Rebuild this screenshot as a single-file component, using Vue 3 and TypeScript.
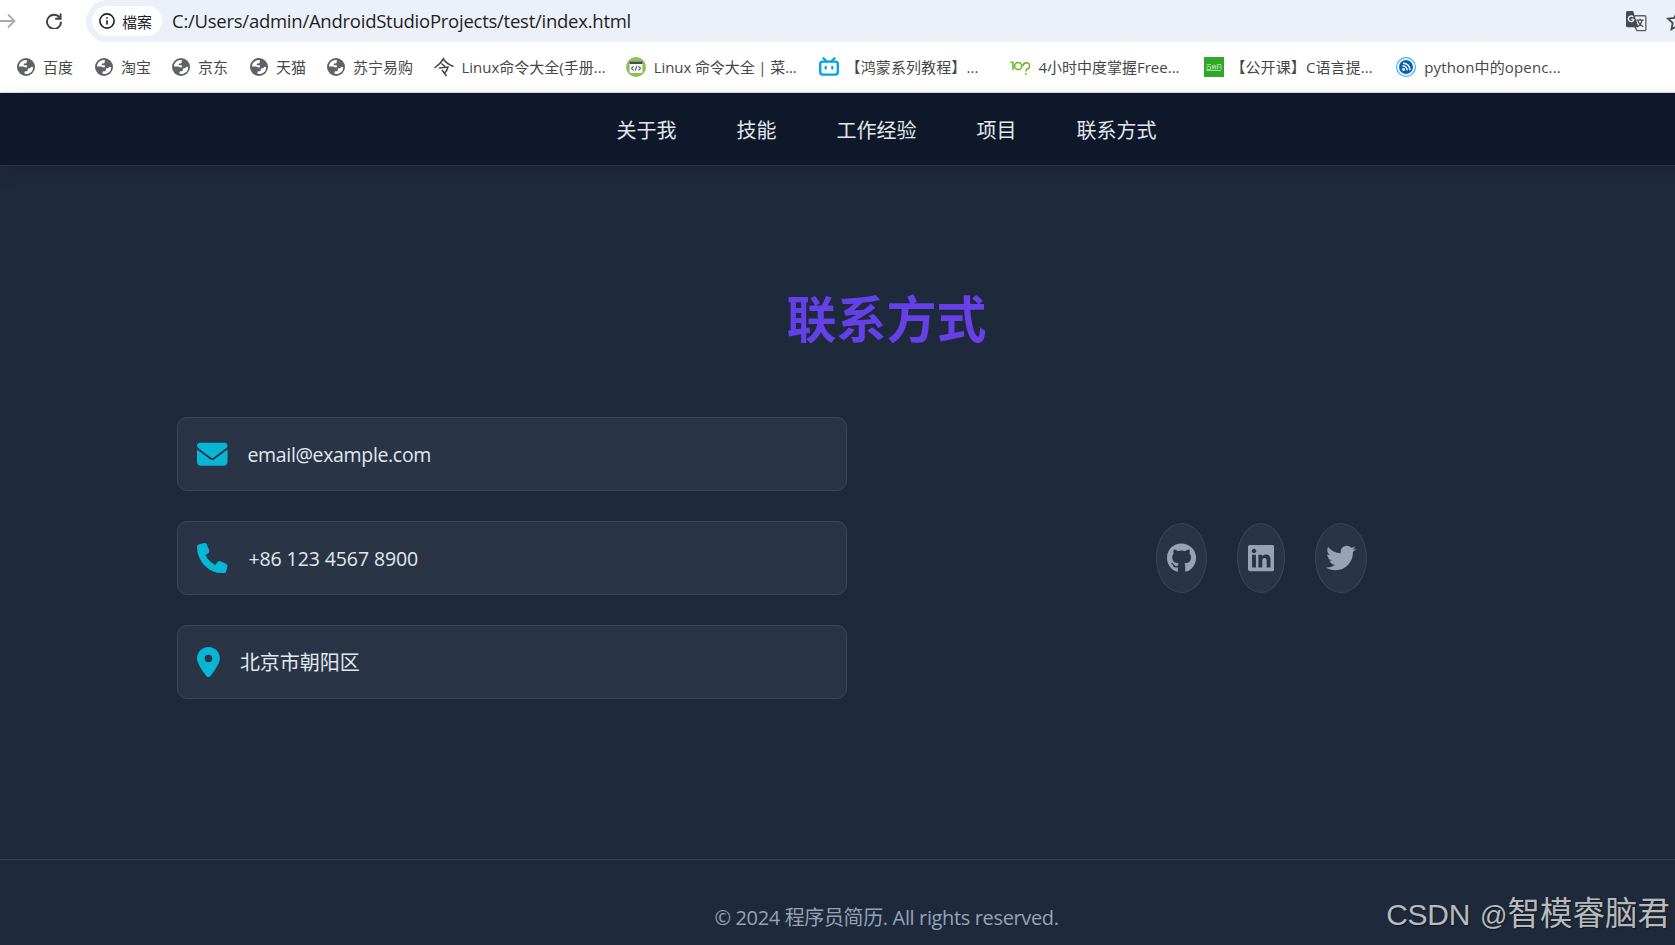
<script setup lang="ts">
interface Bookmark {
  title: string
  icon: 'globe' | 'ling' | 'code' | 'tv' | 'hundred' | 'school' | 'feed'
  size: string
  tone: string
}

const bookmarks: Bookmark[] = [
  { title: '百度', icon: 'globe', size: 'w78', tone: 'cjk' },
  { title: '淘宝', icon: 'globe', size: 'w77', tone: 'cjk' },
  { title: '京东', icon: 'globe', size: 'w78', tone: 'cjk' },
  { title: '天猫', icon: 'globe', size: 'w77', tone: 'cjk' },
  { title: '苏宁易购', icon: 'globe', size: 'w108', tone: 'cjk' },
  { title: 'Linux命令大全(手册...', icon: 'ling', size: 'w192', tone: 'mixed' },
  { title: 'Linux 命令大全 | 菜...', icon: 'code', size: 'w192', tone: 'snug' },
  { title: '【鸿蒙系列教程】...', icon: 'tv', size: 'w192', tone: 'bracket' },
  { title: '4小时中度掌握Free...', icon: 'hundred', size: 'w193', tone: 'mixed' },
  { title: '【公开课】C语言提...', icon: 'school', size: 'w192', tone: 'bracket' },
  { title: 'python中的openc...', icon: 'feed', size: 'w192', tone: 'latin' },
]

const navLinks: string[] = ['关于我', '技能', '工作经验', '项目', '联系方式']

const contacts = [
  {
    text: 'email@example.com',
    tone: 'mail',
    box: '0 0 512 512',
    path: 'M48 64C21.5 64 0 85.5 0 112c0 15.1 7.1 29.3 19.2 38.4L236.8 313.6c11.4 8.5 27 8.5 38.4 0L492.8 150.4c12.1-9.1 19.2-23.3 19.2-38.4c0-26.5-21.5-48-48-48H48zM0 176V384c0 35.3 28.7 64 64 64H448c35.3 0 64-28.7 64-64V176L294.4 339.2c-22.8 17.1-54 17.1-76.8 0L0 176z',
  },
  {
    text: '+86 123 4567 8900',
    tone: 'phone',
    box: '0 0 512 512',
    path: 'M164.9 24.6c-7.7-18.6-28-28.5-47.4-23.2l-88 24C12.1 30.2 0 46 0 64C0 311.4 200.6 512 448 512c18 0 33.8-12.1 38.6-29.5l24-88c5.3-19.4-4.6-39.7-23.2-47.4l-96-40c-16.3-6.8-35.2-2.1-46.3 11.6L304.7 368C234.3 334.7 177.3 277.7 144 207.3L193.3 167c13.7-11.2 18.4-30 11.6-46.3l-40-96z',
  },
  {
    text: '北京市朝阳区',
    tone: 'place',
    box: '0 0 384 512',
    path: 'M215.7 499.2C267 435 384 279.4 384 192C384 86 298 0 192 0S0 86 0 192c0 87.4 117 243 168.3 307.2c12.3 15.3 35.1 15.3 47.4 0zM192 128a64 64 0 1 1 0 128 64 64 0 1 1 0-128z',
  },
]

const socials = [
  {
    name: 'github',
    box: '0 0 496 512',
    path: 'M165.9 397.4c0 2-2.3 3.6-5.2 3.6-3.3.3-5.6-1.3-5.6-3.6 0-2 2.3-3.6 5.2-3.6 3-.3 5.6 1.3 5.6 3.6zm-31.1-4.5c-.7 2 1.3 4.3 4.3 4.9 2.6 1 5.6 0 6.2-2s-1.3-4.3-4.3-5.2c-2.6-.7-5.5.3-6.2 2.3zm44.2-1.7c-2.9.7-4.9 2.6-4.6 4.9.3 2 2.9 3.3 5.9 2.6 2.9-.7 4.9-2.6 4.6-4.6-.3-1.9-3-3.2-5.9-2.9zM244.8 8C106.1 8 0 113.3 0 252c0 110.9 69.8 205.8 169.5 239.2 12.8 2.3 17.3-5.6 17.3-12.1 0-6.2-.3-40.4-.3-61.4 0 0-70 15-84.7-29.8 0 0-11.4-29.1-27.8-36.6 0 0-22.9-15.7 1.6-15.4 0 0 24.9 2 38.6 25.8 21.9 38.6 58.6 27.5 72.9 20.9 2.3-16 8.8-27.1 16-33.7-55.9-6.2-112.3-14.3-112.3-110.5 0-27.5 7.6-41.3 23.6-58.9-2.6-6.5-11.1-33.3 2.6-67.9 20.9-6.5 69 27 69 27 20-5.6 41.5-8.5 62.8-8.5s42.8 2.9 62.8 8.5c0 0 48.1-33.6 69-27 13.7 34.7 5.2 61.4 2.6 67.9 16 17.7 25.8 31.5 25.8 58.9 0 96.5-58.9 104.2-114.8 110.5 9.2 7.9 17 22.9 17 46.4 0 33.7-.3 75.4-.3 83.6 0 6.5 4.6 14.4 17.3 12.1C428.2 457.8 496 362.9 496 252 496 113.3 383.5 8 244.8 8z',
  },
  {
    name: 'linkedin',
    box: '0 0 448 512',
    path: 'M416 32H31.9C14.3 32 0 46.5 0 64.3v383.4C0 465.5 14.3 480 31.9 480H416c17.6 0 32-14.5 32-32.3V64.3c0-17.8-14.4-32.3-32-32.3zM135.4 416H69V202.2h66.5V416zm-33.2-243c-21.3 0-38.5-17.3-38.5-38.5S80.9 96 102.2 96c21.2 0 38.5 17.3 38.5 38.5 0 21.3-17.2 38.5-38.5 38.5zm282.1 243h-66.4V312c0-24.8-.5-56.7-34.5-56.7-34.6 0-39.9 27-39.9 54.9V416h-66.4V202.2h63.7v29.2h.9c8.9-16.8 30.6-34.5 62.9-34.5 67.2 0 79.7 44.3 79.7 101.9V416z',
  },
  {
    name: 'twitter',
    box: '0 0 512 512',
    path: 'M459.37 151.716c.325 4.548.325 9.097.325 13.645 0 138.72-105.583 298.558-298.558 298.558-59.452 0-114.68-17.219-161.137-47.106 8.447.974 16.568 1.299 25.34 1.299 49.055 0 94.213-16.568 130.274-44.832-46.132-.975-84.792-31.188-98.112-72.772 6.498.974 12.995 1.624 19.818 1.624 9.421 0 18.843-1.3 27.614-3.573-48.081-9.747-84.143-51.98-84.143-102.985v-1.299c13.969 7.797 30.214 12.67 47.431 13.319-28.264-18.843-46.781-51.005-46.781-87.391 0-19.492 5.197-37.36 14.294-52.954 51.655 63.675 129.3 105.258 216.365 109.807-1.624-7.797-2.599-15.918-2.599-24.04 0-57.828 46.782-104.934 104.934-104.934 30.213 0 57.502 12.67 76.67 33.137 23.715-4.548 46.456-13.32 66.599-25.34-7.798 24.366-24.366 44.833-46.132 57.827 21.117-2.273 41.584-8.122 60.426-16.243-14.292 20.791-32.161 39.308-52.628 54.253z',
  },
]
</script>

<template>
  <div class="window">
    <div class="toolbar">
      <svg class="forward" viewBox="0 0 16 16"><path d="M0 8h14M8 1.5 14.5 8 8 14.5" /></svg>
      <svg class="reload" viewBox="0 0 16 16">
        <path d="M13.6 4.6A7 7 0 1 0 15 8.8" />
        <path d="M14.6 .4v5.3H9.2" />
      </svg>
      <div class="omnibox">
        <div class="chip">
          <svg class="info" viewBox="0 0 16 16">
            <circle cx="8" cy="8" r="7.1" />
            <path d="M8 7.3v4.3M8 4.3v1.5" />
          </svg>
          <span>檔案</span>
        </div>
        <span class="url">C:/Users/admin/AndroidStudioProjects/test/index.html</span>
        <svg class="translate" viewBox="0 0 22 22">
          <path d="M9 5h10.5q1.3 0 1.3 1.3v13q0 1.3-1.3 1.3h-8L9 16" fill="none" stroke="#5a5d61" stroke-width="1.4" />
          <path d="M1.600 0H7.500L13 17H1.600Q0 17 0 15.400V1.600Q0 0 1.600 0z" fill="#46494d" />
          <path d="M8.200 8.500H5.500M7.600 6.300A2.900 2.900 0 1 0 8.300 8.500" fill="none" stroke="#ebeff9" stroke-width="1.500" />
          <path d="M11 9.500h7.500M14.700 8v1.500M17 9.500q-1 4.500-5 7M12.300 10.500q1.700 4 5.700 6" fill="none" stroke="#46494d" stroke-width="1.200" />
        </svg>
        <svg class="star" viewBox="0 0 18 18">
          <path d="m9 1.800 2.200 4.700 5.100.6-3.800 3.500 1 5.100L9 13.200l-4.500 2.500 1-5.100L1.700 7.100l5.100-.6z" />
        </svg>
      </div>
    </div>

    <div class="bookmarks">
      <div v-for="b in bookmarks" :key="b.title" class="bookmark" :class="b.size">
        <svg v-if="b.icon === 'globe'" class="globe" viewBox="0 0 18 18">
          <circle cx="9" cy="9" r="9" fill="#5f6368" />
          <path d="M9.800 2.100Q4 1.900 2.300 6.600L1.900 8.600H6q1 0 1.500.5.600.6 1.700.300.900-.3.900-1.200 0-1-1-1H7.500q-.8 0-.8-.9 0-.8.800-.8h1q1.300 0 1.300-1.400z" fill="#fff" />
          <path d="M16.200 9.300q-.3 5.500-5.500 6.700l-3.200-.2v-1.500q0-1 1-1h1.300q1 0 1-1v-1.200q0-.8.800-.8h1q1 0 1.300-.800.300-.9 1.200-.7z" fill="#fff" />
        </svg>
        <svg v-else-if="b.icon === 'ling'" class="fav" viewBox="0 0 20 20">
          <path d="M10 1Q6.500 7 .5 11M9.500 2.500Q13 7 19.500 9.500M7.500 6.500l3.500 3M5 11l9-1q-1 4-4 7M8 13l4.500 6" fill="none" stroke="#444" stroke-width="1.500" />
        </svg>
        <svg v-else-if="b.icon === 'code'" class="fav" viewBox="0 0 20 20">
          <circle cx="10" cy="10" r="10" fill="#8cc152" />
          <rect x="3.500" y="4.500" width="13" height="11.500" rx="1" fill="#f3f5f7" />
          <path d="M3.500 4.500h13v2.500h-13z" fill="#434a54" />
          <path d="m7.500 9.300-2 2 2 2m5-4 2 2-2 2M10.800 9l-1.600 4.500" fill="none" stroke="#59616b" stroke-width="1.100" />
        </svg>
        <svg v-else-if="b.icon === 'tv'" class="fav tv" viewBox="0 0 20 20">
          <rect x="1.200" y="4.600" width="17.600" height="13" rx="2.500" fill="none" stroke="#00a4e0" stroke-width="2.400" />
          <path d="m4.500 1.300 3 3M15.500 1.300l-3 3M6.700 9.800v1.800M13.300 9.800v1.800" stroke="#00a4e0" stroke-width="2.300" stroke-linecap="round" />
        </svg>
        <svg v-else-if="b.icon === 'hundred'" class="fav" viewBox="0 0 20 20">
          <path d="M.5 5 3 5.500V13M13.200 9a3.200 3.200 0 1 1 3.400 3.200l-.8 2.200M15.700 16v1.700" fill="none" stroke="#66b51d" stroke-width="1.500" />
          <circle cx="8.200" cy="9" r="3.600" fill="none" stroke="#66b51d" stroke-width="1.500" />
        </svg>
        <svg v-else-if="b.icon === 'school'" class="fav" viewBox="0 0 20 20">
          <path d="M0 0h20v20H0z" fill="#2fa827" />
          <path d="M2.500 7.500h4.500M3 9.500h3.500v3H3zM8.300 8v4.500M8 9.800h4M10 7.500v5M11.700 8v4.500M13.300 12.500v-5h3.700v5M13.500 10h3M2.500 13.500h14.500" fill="none" stroke="#b8e5b4" stroke-width=".8" />
        </svg>
        <svg v-else class="fav" viewBox="0 0 20 20">
          <circle cx="10" cy="10" r="9.400" fill="#fff" stroke="#27b9ef" stroke-width="1.200" />
          <circle cx="10" cy="10" r="7" fill="#0b5fb5" />
          <path d="M7 6.200q6.500 0 7 7M6.500 8.800q4.200.2 4.700 4.600" fill="none" stroke="#fff" stroke-width="1.400" />
          <circle cx="7.600" cy="12.500" r="1.400" fill="#fff" />
        </svg>
        <span :class="b.tone">{{ b.title }}</span>
      </div>
    </div>

    <div class="page">
      <nav class="nav">
        <a v-for="link in navLinks" :key="link">{{ link }}</a>
      </nav>

      <main class="contact">
        <h2>联系方式</h2>
        <div class="columns">
          <div class="cards">
            <div v-for="c in contacts" :key="c.text" class="card">
              <svg :viewBox="c.box"><path :d="c.path" /></svg>
              <span :class="c.tone">{{ c.text }}</span>
            </div>
          </div>
          <div class="socials">
            <a v-for="s in socials" :key="s.name">
              <svg :viewBox="s.box"><path :d="s.path" /></svg>
            </a>
          </div>
        </div>
      </main>

      <footer class="footer"><span>© 2024 程序员简历. All rights reserved.</span></footer>
    </div>

    <div class="watermark"><span class="brand">CSDN</span><span class="at">@</span><span>智模睿脑君</span></div>
  </div>
</template>

<style>
body {
  margin: 0;
  overflow: hidden;
}
</style>

<style scoped>
.window {
  position: relative;
  width: 1675px;
  height: 945px;
  overflow: hidden;
  background: #fff;
  font-family: 'Open Sans', 'Noto Sans CJK SC', sans-serif;
}

svg {
  display: block;
  flex: none;
}

.toolbar {
  display: flex;
  align-items: center;
  height: 42px;
}

.forward {
  width: 16px;
  height: 16px;
  fill: none;
  stroke: #a9abae;
  stroke-width: 1.8;
}

.reload {
  width: 16px;
  height: 16px;
  margin-left: 29.500px;
  fill: none;
  stroke: #3f4246;
  stroke-width: 1.9;
}

.omnibox {
  display: flex;
  align-items: center;
  flex: none;
  box-sizing: border-box;
  width: 1620px;
  height: 42px;
  margin-left: 24.500px;
  padding-left: 6px;
  border-radius: 21px 0 0 21px;
  background: #ecf0f9;
}

.chip {
  display: flex;
  align-items: center;
  gap: 7px;
  flex: none;
  box-sizing: border-box;
  width: 70px;
  height: 30px;
  padding-left: 7px;
  border-radius: 15px;
  background: #fff;
  color: #1f1f1f;
  font: 15px/32px 'Noto Sans CJK TC', sans-serif;
  white-space: nowrap;
}

.chip span {
  margin-top: 1px;
}

.info {
  width: 16px;
  height: 16px;
  fill: none;
  stroke: #1f1f1f;
  stroke-width: 1.6;
}

.url {
  flex: none;
  width: 1454px;
  margin: 0 0 2px 10px;
  color: #1f1f1f;
  font-size: 18.5px;
  letter-spacing: -0.25px;
  white-space: nowrap;
}

.translate {
  width: 21px;
  height: 21px;
}

.star {
  width: 22px;
  height: 22px;
  margin-left: 19px;
  fill: none;
  stroke: #46494d;
  stroke-width: 1.5;
}

.bookmarks {
  display: flex;
  box-sizing: border-box;
  height: 51px;
  padding: 0 0 0 16px;
  border-bottom: 1px solid #dcdedd;
  color: #474747;
  font-size: 15px;
}

.bookmark {
  display: flex;
  align-items: center;
  gap: 8px;
  flex: none;
  white-space: nowrap;
}

.bookmark span {
  margin-bottom: 2px;
}

.snug {
  letter-spacing: -0.1px;
}

.bracket {
  margin-left: -1.5px;
  letter-spacing: 0.1px;
}

.latin {
  letter-spacing: 0.15px;
}

.w77 { width: 77px; }
.w78 { width: 78px; }
.w108 { width: 107.500px; }
.w192 { width: 192.300px; }
.w193 { width: 193.500px; }

.globe {
  width: 18px;
  height: 18px;
  margin-left: 1px;
}

.fav {
  width: 20px;
  height: 20px;
}

.tv {
  margin-left: 1px;
}

.page {
  display: flex;
  flex-direction: column;
  width: 1773px;
  height: 852px;
  background: #1e293b;
}

.nav {
  position: relative;
  display: flex;
  justify-content: center;
  gap: 60px;
  flex: none;
  box-sizing: border-box;
  height: 73px;
  border-bottom: 1px solid #27344a;
  background: linear-gradient(#0f172a, #10192b);
  box-shadow: 0 5px 20px rgba(0, 0, 0, 0.1);
  color: #e2e8f0;
  font-size: 20px;
  line-height: 75px;
}

.contact {
  flex: none;
  box-sizing: border-box;
  height: 693px;
  padding: 113px 176px 0 177px;
}

h2 {
  margin: 0 1px 63px 0;
  background: linear-gradient(90deg, #4f46e5 0%, #7c3aed 100%);
  background-clip: text;
  color: transparent;
  font: 700 50px/75px 'Noto Sans CJK SC', sans-serif;
  text-align: center;
}

.columns {
  display: grid;
  grid-template-columns: 670px 670px;
  gap: 80px;
}

.cards {
  display: flex;
  flex-direction: column;
  gap: 30px;
}

.card {
  display: flex;
  align-items: center;
  gap: 20px;
  box-sizing: border-box;
  height: 74px;
  padding: 0 19px;
  border: 1px solid #3b4758;
  border-radius: 10px;
  background: #293546;
  color: #e2e8f0;
  font-size: 20px;
}

.card svg {
  height: 30.5px;
  fill: #06b6d4;
}

.mail {
  font-size: 19.5px;
  letter-spacing: -0.34px;
}

.phone {
  margin-left: 1px;
  font-size: 19.5px;
  letter-spacing: -0.1px;
}

.place {
  margin-bottom: 1px;
}

.socials {
  display: flex;
  align-items: center;
  justify-content: center;
  gap: 29.600px;
  margin-right: 1px;
}

.socials a {
  display: flex;
  align-items: center;
  justify-content: center;
  box-sizing: border-box;
  height: 70px;
  padding: 0 10px;
  border: 1px solid #3b4758;
  border-radius: 50%;
  background: #293546;
}

.socials svg {
  height: 30px;
  fill: #94a3b8;
}

.footer {
  flex: none;
  height: 85px;
  border-top: 1px solid #334155;
  color: #94a3b8;
  font-size: 20px;
  letter-spacing: -0.36px;
  line-height: 115px;
  text-align: center;
  white-space: nowrap;
}

.watermark {
  position: absolute;
  right: 5px;
  bottom: 5px;
  display: flex;
  align-items: baseline;
  color: #b8babd;
  font: 400 32.5px/48px 'Noto Sans CJK SC', sans-serif;
  text-shadow: 1px 1px 1px rgba(0, 0, 0, 0.4);
  white-space: nowrap;
}

.brand,
.at {
  font-family: 'Liberation Sans', sans-serif;
}

.brand {
  margin-right: 10px;
  font-size: 30px;
  letter-spacing: -0.3px;
}

.at {
  font-size: 27px;
}
</style>
